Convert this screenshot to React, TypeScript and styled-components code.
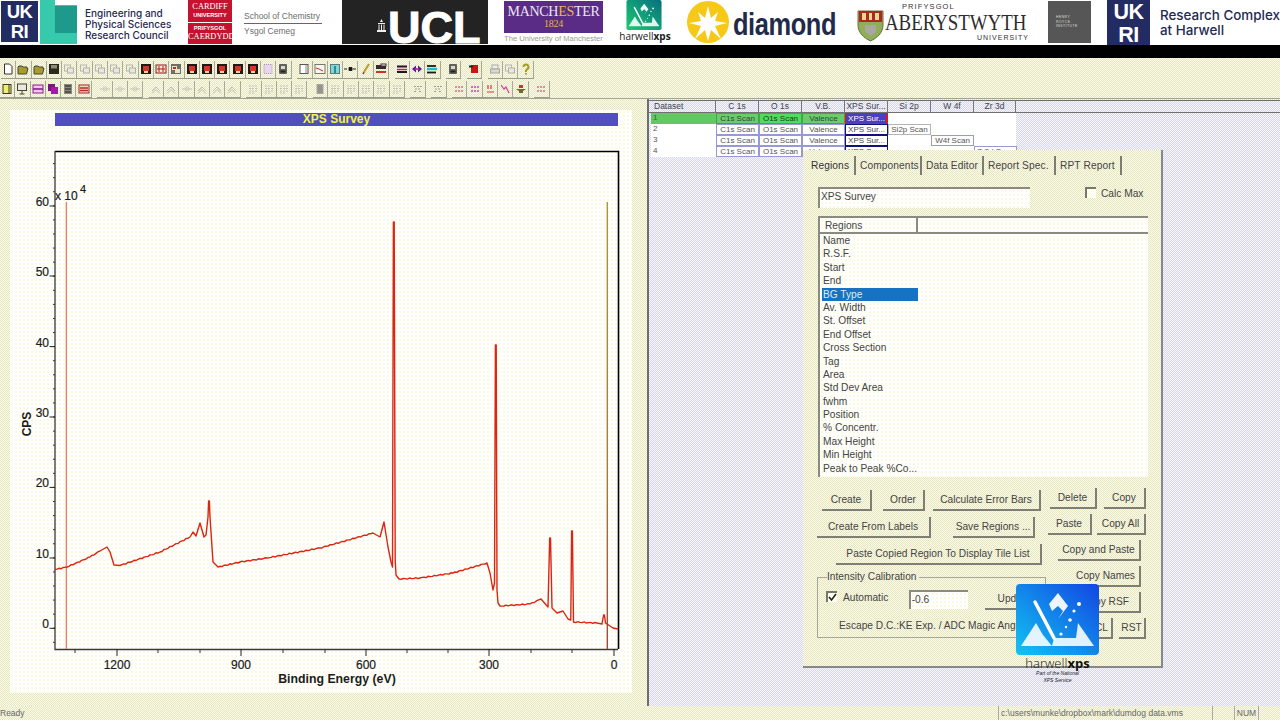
import * as React from 'react'
import styled, { createGlobalStyle, css } from 'styled-components'

const Reset = createGlobalStyle`
  html, body { margin: 0; padding: 0; background: #fff; }
  * { box-sizing: border-box; }
`

const yellowDither = css`
  background: repeating-conic-gradient(#e6e6c4 0 25%, #fbfbe6 0 50%) 0 0 / 2px 2px;
`
const lilacDither = css`
  background: repeating-conic-gradient(#d6d6f0 0 25%, #f6f6fc 0 50%) 0 0 / 2px 2px;
`
const paperDots = css`
  background: radial-gradient(circle, #f6f3c8 0.6px, transparent 0.8px) 0 0 / 4px 4px, #fffffd;
`

const Page = styled.div`
  position: relative;
  width: 1280px;
  height: 720px;
  overflow: hidden;
  display: flex;
  flex-direction: column;
  font-family: 'Liberation Sans', Arial, sans-serif;
  color: #444;
`

/* ---------- logo strip ---------- */

const LogoBar = styled.div`
  height: 45px;
  flex: none;
  display: flex;
  align-items: flex-start;
  background: #fff;
  overflow: hidden;
`
const Logo = styled.div<{ $w: number; $ml: number }>`
  flex: none;
  width: ${p => p.$w}px;
  height: 45px;
  margin-left: ${p => p.$ml}px;
  position: relative;
`
const UkriMark = styled.div<{ $size: number; $top: number }>`
  width: ${p => p.$size}px;
  height: ${p => p.$size + 4}px;
  margin-top: ${p => p.$top}px;
  padding-top: 1px;
  background: #232c62;
  color: #fff;
  font-weight: 700;
  font-size: ${p => p.$size * 0.5}px;
  line-height: ${p => (p.$size + 2) / 2}px;
  letter-spacing: -0.5px;
  text-align: center;
`
const FunderText = styled.div`
  margin-top: 8px;
  font-family: Inter, 'Liberation Sans', sans-serif;
  font-size: 10px;
  font-weight: 500;
  line-height: 10.8px;
  color: #1f2a52;
  white-space: nowrap;
`
const CardiffMark = styled.div`
  height: 44px;
  display: flex;
  flex-direction: column;
  gap: 1px;
  font-family: 'Liberation Serif', serif;
  color: #fff;
  text-align: center;
`
const CardiffHalf = styled.div`
  flex: 1;
  background: #c4122f;
  display: flex;
  flex-direction: column;
  justify-content: center;
  font-size: 8.4px;
  line-height: 10px;
  small {
    font-family: 'Liberation Sans', sans-serif;
    font-size: 5.6px;
    line-height: 7px;
    font-weight: 700;
  }
`
const SchoolText = styled.div`
  padding-top: 11px;
  font-size: 8.5px;
  line-height: 11px;
  color: #6c6c6c;
  white-space: nowrap;
  div:first-child {
    border-bottom: 1px solid #8a4b93;
    padding-bottom: 1px;
    margin-bottom: 2px;
  }
`
const UclMark = styled.div`
  height: 44px;
  background: #232323;
  display: flex;
  align-items: flex-end;
  padding-left: 33px;
  color: #fff;
  font-weight: 700;
  font-size: 45px;
  line-height: 33px;
  -webkit-text-stroke: 1px #fff;
  svg { margin: 0 0 12px 0; flex: none; }
`
const ManchesterBox = styled.div`
  height: 32px;
  margin-top: 1px;
  background: #5a2c86;
  font-family: 'Liberation Serif', serif;
  color: #ece6f2;
  text-align: center;
  font-size: 14px;
  line-height: 15px;
  padding-top: 3px;
  letter-spacing: -0.3px;
  white-space: nowrap;
  b { font-weight: 400; color: #e5b84a; }
  small { display: block; font-size: 10px; line-height: 10px; color: #e5b84a; }
`
const ManchesterCaption = styled.div`
  font-size: 7.6px;
  line-height: 11px;
  color: #9a9a9a;
  text-align: center;
  white-space: nowrap;
`
const SmallMarkWrap = styled.div`
  margin-left: 7px;
`
const SmallXps = styled.div`
  font-family: 'Open Sans', sans-serif;
  font-size: 10px;
  line-height: 13px;
  color: #222;
  text-align: center;
  white-space: nowrap;
  b { font-weight: 700; }
`
const DiamondWord = styled.div`
  font-weight: 700;
  font-size: 31px;
  letter-spacing: -0.5px;
  line-height: 49px;
  color: #1f2b49;
  white-space: nowrap;
  transform: scaleX(0.82);
  transform-origin: left center;
`
const AberTop = styled.div`
  font-size: 7.5px;
  letter-spacing: 1.1px;
  line-height: 8px;
  padding: 3px 0 0 17px;
  color: #333;
`
const AberWord = styled.div`
  font-family: 'Liberation Serif', serif;
  font-size: 24px;
  line-height: 22px;
  color: #2c2c2c;
  white-space: nowrap;
  transform: scaleX(0.785);
  transform-origin: left center;
`
const AberBottom = styled.div`
  font-size: 7px;
  letter-spacing: 1px;
  line-height: 9px;
  text-align: right;
  color: #333;
`
const RoyceBox = styled.div`
  margin-top: 1px;
  height: 42px;
  background: #565656;
  color: #ddd;
  font-size: 3.5px;
  line-height: 4.5px;
  letter-spacing: 0.4px;
  padding: 14px 0 0 8px;
`
const ComplexText = styled.div`
  padding-top: 8px;
  font-family: Inter, 'Liberation Sans', sans-serif;
  font-size: 13.4px;
  font-weight: 500;
  line-height: 14.5px;
  color: #1f2a52;
  white-space: nowrap;
`

const BlackBar = styled.div`
  height: 13px;
  flex: none;
  background: #000;
`

/* ---------- toolbars ---------- */

const Toolbars = styled.div`
  height: 41px;
  flex: none;
  padding-top: 3px;
  display: flex;
  flex-direction: column;
  gap: 2px;
  ${yellowDither};
  border-bottom: 1px solid #a5a596;
`
const ToolRow = styled.div<{ $pad: number }>`
  display: flex;
  gap: 5.6px;
  height: 17.5px;
  padding-left: ${p => p.$pad}px;
`
const ToolGroup = styled.div`
  display: flex;
  border-bottom: 1px solid #9b9b8c;
`
const ToolBtn = styled.div`
  width: 15.3px;
  display: flex;
  align-items: center;
  justify-content: center;
  border-right: 1px solid #a9a99a;
`

const glyphs: Record<string, React.ReactNode> = {
  page: <path d="M2.5 1h5l2.5 2.5V11h-7.5z" fill="#fff" stroke="#333" />,
  folder: <path d="M1 4l1-1h3l1 1h4v1.5h1L9.5 11H1z" fill="#a89a2c" stroke="#444" />,
  disk: <><rect x="1" y="1" width="10" height="10" fill="#2a2a1e" /><rect x="3" y="2" width="6" height="3.5" fill="#8e8e74" /></>,
  ghost: <><rect x="1.5" y="2" width="6" height="6" fill="none" stroke="#b6b6b0" /><rect x="4.5" y="5" width="6" height="5" fill="#e8e8e2" stroke="#b0b0aa" /></>,
  film: <><rect x="1" y="1" width="10" height="10" fill="#1f1a12" /><rect x="3" y="3" width="6" height="5" fill="#d0392a" /><rect x="4" y="8" width="4" height="2" fill="#e8d8a0" /></>,
  filmW: <><rect x="1" y="2" width="10" height="8" fill="#fbe6e0" stroke="#8c1a14" /><path d="M2 6h8M4 3v6M8 3v6" stroke="#b81e14" /></>,
  filmG: <><rect x="1" y="1" width="10" height="10" fill="#6e6e62" /><path d="M2 3h5v3h3v4H5V7H2z" fill="#e8e4cc" /><rect x="3" y="4" width="3" height="2" fill="#c42a20" /></>,
  lilac: <rect x="2" y="1.5" width="8" height="9" fill="#e8d6ec" stroke="#b090b8" strokeDasharray="1 1" />,
  drum: <><rect x="2" y="1" width="8" height="10" rx="1" fill="#62625a" /><rect x="4" y="3" width="4" height="3" fill="#d8d8cc" /><rect x="3.5" y="7.5" width="5" height="2" fill="#26261f" /></>,
  page2: <><rect x="2" y="1.5" width="8" height="9" fill="#fff" stroke="#55554e" /><path d="M8 1.5v9" stroke="#888" /></>,
  redline: <><rect x="1" y="1.5" width="10" height="9" fill="#f6f6ee" stroke="#77776c" /><path d="M2 5l3 1 4 2" stroke="#cc2a1a" fill="none" /></>,
  cyan: <><rect x="1.5" y="1.5" width="9" height="9" fill="#86d4d4" stroke="#55807e" /><rect x="5" y="3" width="2" height="7" fill="#2a8e9a" /></>,
  dash: <path d="M0 6h3M5 4.5h3v3H5zM9 6h3" stroke="#222" fill="#111" />,
  pen: <><path d="M9 1L4 9" stroke="#b8a028" strokeWidth="2" /><path d="M4 9l-1 2" stroke="#c82418" strokeWidth="1.6" /></>,
  tray: <><rect x="1" y="2" width="10" height="4" fill="#2e2e2e" /><rect x="6" y="1" width="5" height="2" fill="#fff" stroke="#333" /><path d="M1 9h10" stroke="#cc3322" strokeWidth="2" /></>,
  bars: <><path d="M1 3.5h10" stroke="#1a1a1a" strokeWidth="2" /><path d="M1 6.5h10" stroke="#a020a8" strokeWidth="1.4" /><path d="M1 9h10" stroke="#1a1a1a" strokeWidth="2" /></>,
  arrows: <><path d="M1 6l4-3.5v7zM11 6L7 2.5v7z" fill="#5b1f88" /><rect x="4.5" y="5" width="3" height="2" fill="#d23a9a" /></>,
  cyanbars: <><path d="M1 3h9" stroke="#1a1a1a" strokeWidth="1.8" /><path d="M1 6h10" stroke="#18c0c8" strokeWidth="2.4" /><path d="M1 9.5h9" stroke="#1a1a1a" strokeWidth="1.8" /></>,
  hat: <><rect x="3" y="2" width="7" height="8" fill="#c41810" /><path d="M1 3.5h4" stroke="#222" strokeWidth="2" /></>,
  print: <><rect x="3" y="2" width="6" height="4" fill="#efefe8" stroke="#aaa" /><rect x="1.5" y="6" width="9" height="4" fill="#d8d8d0" stroke="#a8a8a0" /></>,
  help: <path d="M3.5 4a2.5 2.5 0 1 1 3.6 2.2L6 7.5V9M6 10v1.5" stroke="#a89a1c" strokeWidth="2" fill="none" />,
  ybox: <><rect x="2" y="1.5" width="8" height="9" fill="#f4ec70" stroke="#3a3a2c" /><path d="M8 1.5v9" stroke="#3a3a2c" /></>,
  mon: <><rect x="1.5" y="1" width="9" height="6.5" fill="#e8e8dc" stroke="#44443a" /><path d="M6 7.5V11M3.5 11h5" stroke="#44443a" /></>,
  mbox: <><rect x="1" y="2" width="10" height="8" fill="#f0c8ec" stroke="#8c1c90" /><path d="M1 6h10" stroke="#8c1c90" strokeWidth="1.6" /></>,
  purple: <><rect x="1" y="1" width="7" height="7" fill="#7e1480" /><rect x="4" y="4" width="7" height="7" fill="#a01ca4" /></>,
  gbox: <><rect x="2" y="1" width="8" height="10" fill="#88887e" /><path d="M3 3h6M3 6h6M3 9h6" stroke="#22221c" /></>,
  rbox: <><rect x="1" y="2" width="10" height="8" fill="#f0d8d0" stroke="#a02a1e" /><path d="M2 5h8M2 7.5h8" stroke="#bc2a1c" strokeWidth="1.4" /></>,
  garrow: <path d="M1 6h4M7 6h4M5 3.5v5M7 3.5v5" stroke="#c2c2ba" fill="none" />,
  gup: <path d="M2 8l4-4 4 4M2 10.5l4-4 4 4" stroke="#bcbcb4" fill="none" />,
  gtext: <><path d="M2 3h8M2 5.5h8M2 8h8M2 10h6" stroke="#c0c0b8" strokeDasharray="2 1" /></>,
  gdark: <><rect x="2.5" y="1" width="7" height="10" fill="#a8a8a0" /><path d="M3.5 3h5M3.5 5h5M3.5 7h5M3.5 9h5" stroke="#808078" /></>,
  ttext: <path d="M2 3.5h8M3 6h6M2 8.5h3M7 8.5h3" stroke="#9c9c94" strokeDasharray="2 1" />,
  pinkt: <path d="M2 4h8M2 8h8" stroke="#e06a8a" strokeWidth="1.6" strokeDasharray="2 1" />,
  magt: <path d="M2 4h8M2 8h8" stroke="#d23ecc" strokeWidth="1.6" strokeDasharray="2 1" />,
  redt: <path d="M4 2v4M7 2v4M3 9h7" stroke="#d8383a" strokeWidth="1.2" />,
  redv: <path d="M2 2l3 4 2-2 3 6" stroke="#d84098" strokeWidth="1.2" fill="none" />,
  anvil: <><path d="M4 2h4v3H4z" fill="#c0392a" /><path d="M1 6h10l-3 2v2H4V8z" fill="#6e6a2c" /></>,
}

const row1 = [
  ['page', 'folder', 'folder', 'disk', 'ghost', 'ghost', 'ghost', 'ghost', 'ghost', 'film', 'filmW', 'filmG', 'film', 'film', 'film', 'film', 'film', 'lilac', 'drum'],
  ['page2', 'redline', 'cyan', 'dash', 'pen', 'tray'],
  ['bars', 'arrows', 'cyanbars'],
  ['drum'],
  ['hat'],
  ['print', 'ghost', 'help'],
]
const row2 = [
  ['ybox', 'mon', 'mbox', 'purple', 'gbox', 'rbox'],
  ['garrow', 'garrow', 'garrow'],
  ['gup', 'gup', 'garrow', 'gup', 'gup', 'gup'],
  ['gtext', 'gtext', 'gtext', 'gtext'],
  ['gdark', 'gtext', 'gtext', 'gtext', 'gtext', 'gtext'],
  ['ttext'],
  ['ttext'],
  ['pinkt', 'magt', 'redt', 'redv', 'anvil'],
  ['pinkt'],
]

function ToolStrip({ groups, pad }: { groups: string[][]; pad: number }) {
  return (
    <ToolRow $pad={pad}>
      {groups.map((group, g) => (
        <ToolGroup key={g}>
          {group.map((name, i) => (
            <ToolBtn key={i}>
              <svg width="12" height="12" viewBox="0 0 12 12">{glyphs[name]}</svg>
            </ToolBtn>
          ))}
        </ToolGroup>
      ))}
    </ToolRow>
  )
}

/* ---------- main area ---------- */

const Main = styled.div`
  flex: 1;
  min-height: 0;
  display: flex;
`
const LeftPane = styled.div`
  width: 649px;
  flex: none;
  padding: 11px 15px 0 10px;
  border-right: 2px solid #6e6e6e;
  ${yellowDither};
`
const PlotSheet = styled.div`
  height: 583px;
  ${paperDots};
  padding: 3px 14px 0 45px;
`
const PlotTitle = styled.div`
  height: 13px;
  background: #4f4fbe;
  color: #f4f43c;
  font-size: 12px;
  font-weight: 700;
  line-height: 13px;
  text-align: center;
`
const PlotSvg = styled.svg`
  display: block;
  margin-left: -45px;
  text {
    font-family: 'Liberation Sans', Arial, sans-serif;
    fill: #1c1c1c;
  }
`

const RightPane = styled.div`
  flex: 1;
  ${lilacDither};
`
const GridHead = styled.div`
  height: 13px;
  margin-top: 1px;
  padding-left: 2px;
  display: flex;
  border-top: 1px solid #707070;
  border-bottom: 1px solid #707070;
`
const HeadCell = styled.div<{ $w: number; $left?: boolean }>`
  width: ${p => p.$w}px;
  flex: none;
  border-right: 1px solid #777;
  font-size: 8.5px;
  line-height: 11px;
  color: #444;
  padding-left: ${p => (p.$left ? 3 : 0)}px;
  text-align: ${p => (p.$left ? 'left' : 'center')};
  white-space: nowrap;
`
const GridBody = styled.div`
  width: 365px;
  height: 43px;
  margin-left: 2px;
  background: #fff;
  display: flex;
  flex-direction: column;
`
const GridRow = styled.div`
  height: 11px;
  display: flex;
`
const RowLabel = styled.div<{ $on?: boolean }>`
  width: 65px;
  flex: none;
  padding-left: 2px;
  font-size: 8px;
  line-height: 10px;
  color: #555;
  background: ${p => (p.$on ? '#63c763' : '#fff')};
`
type CellKind = 'green' | 'greenHi' | 'sel' | 'plain' | 'xps' | 'soft' | 'none'
const cellStyle: Record<CellKind, ReturnType<typeof css>> = {
  green: css`background: #6ccb6c; border-color: #4c9e4c; color: #2c4a2c;`,
  greenHi: css`background: #4fdc5f; border-color: #38b048; color: #1c401c;`,
  sel: css`background: #4a3fc0; border-color: #e21818; color: #fff; box-shadow: inset -1px 0 0 #e21818;`,
  plain: css`background: #fff; border-color: #9898d8; color: #555;`,
  xps: css`background: #fff; border-color: #101080; color: #444;`,
  soft: css`background: #fff; border-color: #b4b4b4; color: #555;`,
  none: css`background: transparent; border-color: transparent;`,
}
const ScanCell = styled.div<{ $kind: CellKind }>`
  width: 43px;
  flex: none;
  border: 1px solid;
  font-size: 8px;
  line-height: 9px;
  text-align: center;
  white-space: nowrap;
  overflow: hidden;
  ${p => cellStyle[p.$kind]};
`

const colWidths = [65, 43, 43, 43, 43, 43, 43, 42]
const colNames = ['Dataset', 'C 1s', 'O 1s', 'V.B.', 'XPS Sur...', 'Si 2p', 'W 4f', 'Zr 3d']

const gridRows: { label: string; on?: boolean; cells: [string, CellKind][] }[] = [
  { label: '1', on: true, cells: [['C1s Scan', 'green'], ['O1s Scan', 'greenHi'], ['Valence', 'green'], ['XPS Sur...', 'sel']] },
  { label: '2', cells: [['C1s Scan', 'plain'], ['O1s Scan', 'plain'], ['Valence', 'plain'], ['XPS Sur...', 'xps'], ['Si2p Scan', 'soft']] },
  { label: '3', cells: [['C1s Scan', 'plain'], ['O1s Scan', 'plain'], ['Valence', 'plain'], ['XPS Sur...', 'xps'], ['', 'none'], ['W4f Scan', 'plain']] },
  { label: '4', cells: [['C1s Scan', 'plain'], ['O1s Scan', 'plain'], ['Valence', 'plain'], ['XPS Sur...', 'xps'], ['', 'none'], ['', 'none'], ['Zr3d Scan', 'plain']] },
]

/* ---------- regions dialog ---------- */

const Dialog = styled.div`
  position: absolute;
  left: 803px;
  top: 150px;
  width: 360px;
  height: 518px;
  ${yellowDither};
  border-right: 2px solid #888;
  border-bottom: 2px solid #888;
  font-size: 10.2px;
`
const TabRow = styled.div`
  margin-top: 6px;
  height: 19px;
  display: flex;
`
const Tab = styled.div<{ $w: number; $active?: boolean }>`
  width: ${p => p.$w}px;
  flex: none;
  border-right: 2px solid #7c7c72;
  padding-left: ${p => (p.$active ? 8 : 4)}px;
  line-height: ${p => (p.$active ? 19 : 20)}px;
  letter-spacing: 0.1px;
  white-space: nowrap;
  color: ${p => (p.$active ? '#333' : '#454545')};
`
const TitleRow = styled.div`
  margin: 12px 0 0 15px;
  height: 21px;
  display: flex;
`
const TitleInput = styled.div`
  width: 212px;
  ${paperDots};
  border-top: 2px solid #8a8a80;
  border-left: 2px solid #8a8a80;
  padding-left: 1px;
  line-height: 15px;
`
const CheckLine = styled.div`
  margin-left: 55px;
  display: flex;
  gap: 5px;
  line-height: 14px;
`
const CheckBox = styled.div`
  width: 11px;
  height: 11px;
  flex: none;
  background: #fffff0;
  border-top: 2px solid #77776c;
  border-left: 2px solid #77776c;
  svg { display: block; }
`
const RegionList = styled.div`
  margin: 8px 0 0 15px;
  width: 330px;
  height: 261px;
  ${paperDots};
  border-top: 2px solid #8a8a80;
  border-left: 2px solid #8a8a80;
`
const ListHead = styled.div`
  height: 16px;
  border-bottom: 2px solid #8a8a80;
  div {
    width: 98px;
    height: 14px;
    border-right: 2px solid #8a8a80;
    padding-left: 5px;
    line-height: 16px;
  }
`
const RegionRow = styled.div<{ $sel?: boolean }>`
  width: 96px;
  height: 13.4px;
  margin-left: 2px;
  padding-left: 1px;
  line-height: 13px;
  white-space: nowrap;
  color: ${p => (p.$sel ? '#dfeaf6' : '#444')};
  background: ${p => (p.$sel ? '#1673c4' : 'transparent')};
`
const ButtonArea = styled.div`
  margin: 11px 0 0 14px;
  display: flex;
  gap: 2px;
`
const LeftButtons = styled.div`
  width: 229px;
  padding-top: 2px;
  display: flex;
  flex-direction: column;
  gap: 6px;
`
const RightButtons = styled.div`
  display: flex;
  flex-direction: column;
  gap: 5px;
`
const ButtonRow = styled.div<{ $pad?: number; $gap?: number }>`
  display: flex;
  gap: ${p => p.$gap ?? 0}px;
  padding-left: ${p => p.$pad ?? 0}px;
`
const Button = styled.div<{ $w: number; $h?: number; $end?: boolean; $ml?: number }>`
  width: ${p => p.$w}px;
  height: ${p => p.$h ?? 21}px;
  margin-left: ${p => p.$ml ?? 0}px;
  flex: none;
  border-right: 2px solid #7e7e74;
  border-bottom: 2px solid #7e7e74;
  line-height: ${p => (p.$h ?? 21) - 2}px;
  text-align: ${p => (p.$end ? 'right' : 'center')};
  padding-right: ${p => (p.$end ? 3 : 0)}px;
  white-space: nowrap;
  overflow: hidden;
`
const CalibGroup = styled.fieldset`
  margin: 0;
  padding: 0 0 0 8px;
  height: 67px;
  border: 1px solid #a6a698;
  min-width: 0;
  legend {
    margin-left: 1px;
    padding: 0 3px 0 0;
    font-size: 10.2px;
    line-height: 12px;
  }
`
const CalibRow = styled.div`
  margin-top: 8px;
  height: 20px;
  display: flex;
  line-height: 14px;
`
const AutoLabel = styled.div`
  width: 76px;
  padding-left: 6px;
`
const OffsetInput = styled.div`
  width: 63px;
  height: 19px;
  margin-top: -1px;
  ${paperDots};
  border-top: 2px solid #8a8a80;
  border-left: 2px solid #8a8a80;
  line-height: 15px;
  padding-left: 1px;
`
const UpdateButton = styled(Button)`
  margin-top: -1px;
`
const EscapeText = styled.div`
  margin: 8px 0 0 13px;
  white-space: nowrap;
  line-height: 14px;
`

const HarwellBadge = styled.div`
  position: absolute;
  left: 1016px;
  top: 584px;
  width: 83px;
  text-align: center;
  color: #222;
`
const BadgeName = styled.div`
  margin-top: 1px;
  font-family: 'Open Sans', sans-serif;
  font-size: 13px;
  line-height: 14px;
  font-weight: 300;
  white-space: nowrap;
  color: #111;
  b { font-weight: 700; }
`
const BadgeNote = styled.div`
  font-size: 5px;
  line-height: 7px;
  font-style: italic;
  color: #222;
`

/* ---------- status bar ---------- */

const StatusBar = styled.div`
  height: 14px;
  flex: none;
  display: flex;
  ${yellowDither};
  font-size: 8.5px;
  line-height: 14px;
  color: #666;
`
const StatusReady = styled.div`
  width: 998px;
  flex: none;
`
const StatusPath = styled.div`
  width: 214px;
  flex: none;
  padding-left: 2px;
  border-left: 1px solid #aaa;
  white-space: nowrap;
`
const StatusSlot = styled.div<{ $w: number }>`
  width: ${p => p.$w}px;
  flex: none;
  border-left: 1px solid #aaa;
  text-align: center;
`

/* spectrum in page coordinates, traced off the survey */
const trace: [number, number][] = [
  [55, 569.5], [67, 567], [90, 557], [100, 551], [107, 547], [110, 552], [114, 565], [120, 565.5],
  [160, 552], [190, 537], [193, 532], [196, 536], [200, 523], [204, 537], [206, 535], [208, 517], [208.6, 501],
  [209.4, 501], [210, 517], [213, 562], [218, 567], [240, 562], [267, 558], [320, 548],
  [373, 533], [380, 537], [384, 522], [388, 547], [391, 562], [392.5, 567], [393.4, 222], [394.2, 222],
  [395.2, 560], [396, 575], [399, 579], [420, 578], [453, 573], [487, 563], [490, 573], [493, 590],
  [494.5, 583], [495.4, 345], [496.2, 345], [497, 590], [498, 603], [500, 606], [530, 604], [541, 599],
  [548, 607], [549.7, 538], [550.5, 538], [552, 608], [557, 613], [563, 611], [568, 619], [570.8, 620],
  [571.6, 531], [572.4, 531], [573.5, 622], [597, 623], [602, 624], [603.6, 615], [604.4, 615], [605.5, 623],
  [613, 628], [618, 629],
]

function roughPath(points: [number, number][]) {
  let d = `M${points[0][0]} ${points[0][1]}`
  for (let i = 1; i < points.length; i++) {
    const [x0, y0] = points[i - 1]
    const [x1, y1] = points[i]
    const flat = x1 - x0 > 8
    const steps = flat ? Math.floor((x1 - x0) / 2) : 1
    for (let s = 1; s <= steps; s++) {
      const t = s / steps
      const wob = flat && s < steps ? Math.sin(x0 * 3.1 + s * 2.3) * 0.55 : 0
      d += `L${(x0 + (x1 - x0) * t).toFixed(1)} ${(y0 + (y1 - y0) * t + wob).toFixed(1)}`
    }
  }
  return d
}

const yMajor = [
  { label: '60', y: 206 }, { label: '50', y: 276 }, { label: '40', y: 346.6 }, { label: '30', y: 417 },
  { label: '20', y: 487.4 }, { label: '10', y: 558 }, { label: '0', y: 628.3 },
]
const xMajor = [
  { label: '1200', x: 117 }, { label: '900', x: 241 }, { label: '600', x: 366 }, { label: '300', x: 489 }, { label: '0', x: 614 },
]
const xMinor = [75, 158, 200, 283, 325, 407, 448, 531, 572]
const yMinor: number[] = []
for (let y = 642.3; y > 160; y -= 14.08) yMinor.push(y)

function Survey() {
  return (
    <PlotSvg width="622" height="567" viewBox="10 126 622 567">
      <defs>
        <linearGradient id="marker" x1="0" y1="202" x2="0" y2="649" gradientUnits="userSpaceOnUse">
          <stop offset="0" stopColor="#a89a34" />
          <stop offset="0.6" stopColor="#a87c34" />
          <stop offset="1" stopColor="#a2483a" />
        </linearGradient>
      </defs>
      <path d="M55 151.500H618.500V649" fill="none" stroke="#000" strokeWidth="1.6" />
      <path d="M55 151V649.500H618" fill="none" stroke="#3a3a3a" strokeWidth="1.3" />
      {yMinor.map(y => <path key={y} d={`M53 ${y}H55`} stroke="#333" />)}
      {yMajor.map(t => (
        <g key={t.label}>
          <path d={`M49.5 ${t.y}H55`} stroke="#222" />
          <text x="49" y={t.y} fontSize="12" textAnchor="end" stroke="#1c1c1c" strokeWidth="0.2">{t.label}</text>
        </g>
      ))}
      {xMinor.map(x => <path key={x} d={`M${x} 649V653`} stroke="#333" />)}
      {xMajor.map(t => (
        <g key={t.label}>
          <path d={`M${t.x} 649V656`} stroke="#222" />
          <text x={t.x} y="669" fontSize="12" textAnchor="middle" stroke="#1c1c1c" strokeWidth="0.2">{t.label}</text>
        </g>
      ))}
      <path d="M66.3 202V649" stroke="#e4705e" strokeWidth="1.2" />
      <path d="M607.3 202V649" stroke="url(#marker)" strokeWidth="1.4" />
      <path d={roughPath(trace)} fill="none" stroke="#dc2410" strokeWidth="1.4" strokeLinejoin="round" />
      <text x="55" y="200" fontSize="12" stroke="#1c1c1c" strokeWidth="0.2">x 10</text>
      <text x="80" y="193" fontSize="11" stroke="#1c1c1c" strokeWidth="0.2">4</text>
      <text x="337" y="682.5" fontSize="12.3" fontWeight="700" textAnchor="middle">Binding Energy (eV)</text>
      <text transform="translate(31 424) rotate(-90)" fontSize="12" fontWeight="700" textAnchor="middle">CPS</text>
    </PlotSvg>
  )
}

const MarkSvg = styled.svg`
  display: block;
`

function XpsMark({ size, id, from, to }: { size: [number, number]; id: string; from: string; to: string }) {
  return (
    <MarkSvg width={size[0]} height={size[1]} viewBox="0 0 83 71">
      <defs>
        <linearGradient id={id} x1="0" y1="1" x2="1" y2="0">
          <stop offset="0" stopColor={from} />
          <stop offset="1" stopColor={to} />
        </linearGradient>
      </defs>
      <rect width="83" height="71" rx="4" fill={`url(#${id})`} />
      <path d="M33 20L42 9l10 13-10 13 5-8-5-5-6 5z" fill="#fff" fillOpacity="0.92" />
      <path d="M20 39L5 62h31l-9-11z" fill="#fff" fillOpacity="0.88" />
      <path d="M62 39l16 23H36l2-8h22z" fill="#fff" fillOpacity="0.88" />
      <path d="M19 18l19 36" stroke="#fff" strokeWidth="3.5" strokeLinecap="round" />
      <circle cx="63" cy="20" r="2" fill="#fff" />
      <circle cx="58" cy="27" r="1.6" fill="#fff" />
      <circle cx="54" cy="36" r="1.8" fill="#fff" />
      <circle cx="50" cy="43" r="1.2" fill="#fff" />
      <circle cx="45" cy="50" r="1.6" fill="#fff" />
    </MarkSvg>
  )
}

const regionNames = [
  'Name', 'R.S.F.', 'Start', 'End', 'BG Type', 'Av. Width', 'St. Offset', 'End Offset', 'Cross Section', 'Tag', 'Area',
  'Std Dev Area', 'fwhm', 'Position', '% Concentr.', 'Max Height', 'Min Height', 'Peak to Peak %Co...',
]

const tabs = [
  { name: 'Regions', w: 53, active: true },
  { name: 'Components', w: 66 },
  { name: 'Data Editor', w: 62 },
  { name: 'Report Spec.', w: 72 },
  { name: 'RPT Report', w: 66 },
]

export default function App() {
  return (
    <Page>
      <Reset />
      <LogoBar>
        <Logo $w={37} $ml={1}>
          <UkriMark $size={37} $top={1}>UK<br />RI</UkriMark>
        </Logo>
        <Logo $w={38} $ml={2}>
          <svg width="38" height="45" viewBox="0 0 38 45">
            <path d="M0 0h15v5h22v39H0z" fill="#36c9ab" />
            <rect x="15" y="6" width="22" height="27" fill="#1d9a8b" />
          </svg>
        </Logo>
        <Logo $w={100} $ml={7}>
          <FunderText>Engineering and<br />Physical Sciences<br />Research Council</FunderText>
        </Logo>
        <Logo $w={44} $ml={3}>
          <CardiffMark>
            <CardiffHalf>CARDIFF<small>UNIVERSITY</small></CardiffHalf>
            <CardiffHalf><small>PRIFYSGOL</small>CAERDYDD</CardiffHalf>
          </CardiffMark>
        </Logo>
        <Logo $w={78} $ml={12}>
          <SchoolText><div>School of Chemistry</div><div>Ysgol Cemeg</div></SchoolText>
        </Logo>
        <Logo $w={146} $ml={20}>
          <UclMark>
            <svg width="13" height="13" viewBox="0 0 13 13">
              <path d="M6.5 0l1.500 3h-3zM3 4h7v1H3zM3.500 5.500h1V11h-1zM6 5.500h1V11H6zM8.500 5.500h1V11h-1zM2 11h9v2H2z" fill="#eee" />
            </svg>
            UCL
          </UclMark>
        </Logo>
        <Logo $w={99} $ml={16}>
          <ManchesterBox>MANCH<b>ES</b>TER<small>1824</small></ManchesterBox>
          <ManchesterCaption>The University of Manchester</ManchesterCaption>
        </Logo>
        <Logo $w={52} $ml={16}>
          <SmallMarkWrap>
            <XpsMark size={[36, 30]} id="small-xps" from="#18cc70" to="#0a6e80" />
          </SmallMarkWrap>
          <SmallXps>harwell<b>xps</b></SmallXps>
        </Logo>
        <Logo $w={42} $ml={16}>
          <svg width="42" height="45" viewBox="0 0 42 45">
            <circle cx="21" cy="22" r="21" fill="#f6c818" />
            <path d="M21 6l3 12 7-6-3 9 12 2-12 3 6 13-10-9-3 11-3-11-10 9 6-13L2 23l12-2-3-9 7 6z" fill="#fff" />
          </svg>
        </Logo>
        <Logo $w={108} $ml={4}>
          <DiamondWord>diamond</DiamondWord>
        </Logo>
        <Logo $w={27} $ml={16}>
          <svg width="27" height="45" viewBox="0 0 27 45">
            <path d="M1 11h25v14c0 8-6 13-12.500 16C7 38 1 33 1 25z" fill="#8fae58" stroke="#6e6e3a" />
            <path d="M2 11h23v11H2z" fill="#a82a22" />
            <path d="M5 13h4v7H5zM12 13h3v7h-3zM18 13h4v7h-4z" fill="#e8d890" />
            <path d="M8 25h11v7l-5 4-6-4z" fill="#a8a8a0" />
          </svg>
        </Logo>
        <Logo $w={144} $ml={1}>
          <AberTop>PRIFYSGOL</AberTop>
          <AberWord>ABERYSTWYTH</AberWord>
          <AberBottom>UNIVERSITY</AberBottom>
        </Logo>
        <Logo $w={43} $ml={19}>
          <RoyceBox>HENRY<br />ROYCE<br />INSTITUTE</RoyceBox>
        </Logo>
        <Logo $w={43} $ml={16}>
          <UkriMark $size={43} $top={0}>UK<br />RI</UkriMark>
        </Logo>
        <Logo $w={120} $ml={10}>
          <ComplexText>Research Complex<br />at Harwell</ComplexText>
        </Logo>
      </LogoBar>
      <BlackBar />
      <Toolbars>
        <ToolStrip groups={row1} pad={1} />
        <ToolStrip groups={row2} pad={0} />
      </Toolbars>
      <Main>
        <LeftPane>
          <PlotSheet>
            <PlotTitle>XPS Survey</PlotTitle>
            <Survey />
          </PlotSheet>
        </LeftPane>
        <RightPane>
          <GridHead>
            {colNames.map((name, i) => (
              <HeadCell key={name} $w={colWidths[i]} $left={i === 0}>{name}</HeadCell>
            ))}
          </GridHead>
          <GridBody>
            {gridRows.map(row => (
              <GridRow key={row.label}>
                <RowLabel $on={row.on}>{row.label}</RowLabel>
                {row.cells.map(([text, kind], i) => (
                  <ScanCell key={i} $kind={kind}>{text}</ScanCell>
                ))}
              </GridRow>
            ))}
          </GridBody>
        </RightPane>
      </Main>
      <StatusBar>
        <StatusReady>Ready</StatusReady>
        <StatusPath>c:\users\munke\dropbox\mark\dumdog data.vms</StatusPath>
        <StatusSlot $w={22} />
        <StatusSlot $w={24}>NUM</StatusSlot>
        <StatusSlot $w={22} />
      </StatusBar>

      <Dialog>
        <TabRow>
          {tabs.map(t => (
            <Tab key={t.name} $w={t.w} $active={t.active}>{t.name}</Tab>
          ))}
        </TabRow>
        <TitleRow>
          <TitleInput>XPS Survey</TitleInput>
          <CheckLine>
            <CheckBox />
            Calc Max
          </CheckLine>
        </TitleRow>
        <RegionList>
          <ListHead><div>Regions</div></ListHead>
          {regionNames.map(name => (
            <RegionRow key={name} $sel={name === 'BG Type'}>{name}</RegionRow>
          ))}
        </RegionList>
        <ButtonArea>
          <LeftButtons>
            <ButtonRow $pad={5}>
              <Button $w={50}>Create</Button>
              <Button $w={42} $ml={11}>Order</Button>
              <Button $w={108} $ml={8}>Calculate Error Bars</Button>
            </ButtonRow>
            <ButtonRow $gap={22}>
              <Button $w={114}>Create From Labels</Button>
              <Button $w={82}>Save Regions ...</Button>
            </ButtonRow>
            <ButtonRow $pad={19}>
              <Button $w={206}>Paste Copied Region To Display Tile List</Button>
            </ButtonRow>
            <CalibGroup>
              <legend>Intensity Calibration</legend>
              <CalibRow>
                <CheckBox>
                  <svg width="9" height="9" viewBox="0 0 9 9">
                    <path d="M1 4l2.500 3L8 1" fill="none" stroke="#222" strokeWidth="1.6" />
                  </svg>
                </CheckBox>
                <AutoLabel>Automatic</AutoLabel>
                <OffsetInput>-0.6</OffsetInput>
                <UpdateButton $w={60} $h={20} $ml={17}>Update</UpdateButton>
              </CalibRow>
              <EscapeText>Escape D.C.:KE Exp. / ADC Magic Angle</EscapeText>
            </CalibGroup>
          </LeftButtons>
          <RightButtons>
            <ButtonRow $pad={2} $gap={7}>
              <Button $w={47}>Delete</Button>
              <Button $w={42}>Copy</Button>
            </ButtonRow>
            <ButtonRow $gap={5}>
              <Button $w={44}>Paste</Button>
              <Button $w={49}>Copy All</Button>
            </ButtonRow>
            <ButtonRow $pad={10}>
              <Button $w={83}>Copy and Paste</Button>
            </ButtonRow>
            <ButtonRow $pad={24}>
              <Button $w={69}>Copy Names</Button>
            </ButtonRow>
            <ButtonRow $pad={24}>
              <Button $w={69}>Copy RSF</Button>
            </ButtonRow>
            <ButtonRow $pad={42} $gap={6}>
              <Button $w={23} $end>CL</Button>
              <Button $w={27}>RST</Button>
            </ButtonRow>
          </RightButtons>
        </ButtonArea>
      </Dialog>

      <HarwellBadge>
        <XpsMark size={[83, 71]} id="big-xps" from="#12c4f2" to="#1246e2" />
        <BadgeName>harwell<b>xps</b></BadgeName>
        <BadgeNote>Part of the National<br />XPS Service</BadgeNote>
      </HarwellBadge>
    </Page>
  )
}
